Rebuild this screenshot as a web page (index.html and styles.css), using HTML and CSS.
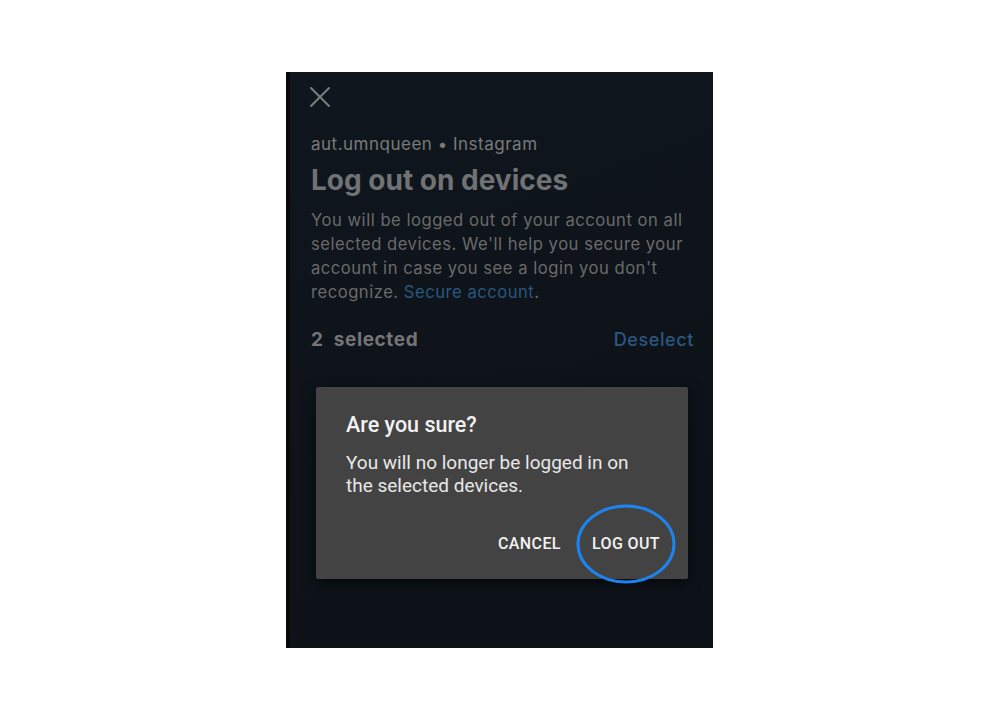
FILE: index.html
```html
<!DOCTYPE html>
<html lang="en">
<head>
<meta charset="utf-8">
<title>Log out on devices</title>
<link rel="stylesheet" href="styles.css">
</head>
<body>
<div class="screen">
  <div class="panel">
    <div class="close-row">
      <svg class="close-icon" width="22" height="22" viewBox="0 0 22 22" aria-hidden="true">
        <path d="M2 2 L20 20 M20 2 L2 20" stroke="#7c7c7c" stroke-width="2" stroke-linecap="round" fill="none"/>
      </svg>
    </div>
    <div class="account">aut.umnqueen • Instagram</div>
    <h1 class="title">Log out on devices</h1>
    <p class="desc">You will be logged out of your account on all selected devices. We'll help you secure your account in case you see a login you don't recognize. <span class="link">Secure account</span>.</p>
    <div class="sel-row">
      <span class="sel-count">2&nbsp; selected</span>
      <span class="deselect">Deselect</span>
    </div>

    <div class="dialog">
      <div class="dialog-title">Are you sure?</div>
      <div class="dialog-body">You will no longer be logged in on the selected devices.</div>
      <div class="dialog-actions">
        <span class="btn">CANCEL</span>
        <span class="btn btn-logout">LOG OUT
          <svg class="ring" width="104" height="84" viewBox="0 0 104 84" aria-hidden="true">
            <ellipse cx="52" cy="42" rx="48" ry="38" fill="none" stroke="#1c84f0" stroke-width="3"/>
          </svg>
        </span>
      </div>
    </div>
  </div>
</div>
</body>
</html>
```

FILE: styles.css
```css
html, body {
  margin: 0;
  padding: 0;
  background: #ffffff;
}

.screen {
  width: 1000px;
  height: 720px;
  display: flex;
  justify-content: center;
  padding-top: 72px;
  box-sizing: border-box;
}

.panel {
  position: relative;
  width: 427px;
  height: 576px;
  box-sizing: border-box;
  margin-left: -1px;
  background: linear-gradient(160deg, #10161d 0%, #0d1319 60%, #0c1218 100%);
  border-left: 4px solid #070809;
  padding: 15px 19px 0 21px;
  font-family: "Inter", "Open Sans", sans-serif;
  display: flex;
  flex-direction: column;
}

.close-row {
  height: 20px;
  display: flex;
  align-items: center;
}

.close-icon {
  margin-left: -2px;
}

.account {
  margin-top: 25px;
  font-size: 17px;
  line-height: 24px;
  color: #7a7a7a;
  letter-spacing: 0.5px;
}

.title {
  margin: 6px 0 0 0;
  font-size: 28px;
  line-height: 36px;
  font-weight: 700;
  color: #717274;
  letter-spacing: 0;
}

.desc {
  margin: 10px 0 0 0;
  font-size: 16.6px;
  line-height: 24px;
  color: #6a6a6a;
  letter-spacing: 0.52px;
}

.link {
  display: inline-block;
  color: #29577f;
}

.sel-row {
  margin-top: 22px;
  height: 26px;
  display: flex;
  justify-content: space-between;
  align-items: center;
}

.sel-count {
  font-size: 19px;
  font-weight: 700;
  color: #757575;
  letter-spacing: 0.6px;
}

.deselect {
  font-size: 18px;
  font-weight: 500;
  color: #2a5880;
  letter-spacing: 0.6px;
}

.dialog {
  position: absolute;
  left: 26px;
  top: 315px;
  width: 372px;
  height: 192px;
  box-sizing: border-box;
  background: #434343;
  border-radius: 2px;
  box-shadow: 0 4px 14px rgba(0, 0, 0, 0.5);
  padding: 25px 24px 0 30px;
  font-family: "Roboto", sans-serif;
  display: flex;
  flex-direction: column;
}

.dialog-title {
  font-size: 21.5px;
  line-height: 26px;
  font-weight: 500;
  color: #f2f2f2;
}

.dialog-body {
  margin-top: 13px;
  font-size: 19px;
  line-height: 23px;
  color: #e8e8e8;
  width: 300px;
}

.dialog-actions {
  margin-top: 37px;
  display: flex;
  justify-content: flex-end;
  gap: 31px;
  padding-right: 4px;
}

.btn {
  position: relative;
  font-size: 16px;
  line-height: 20px;
  font-weight: 500;
  color: #f2f2f2;
  letter-spacing: 0.4px;
}

.ring {
  position: absolute;
  left: -18px;
  top: -32px;
}
```
